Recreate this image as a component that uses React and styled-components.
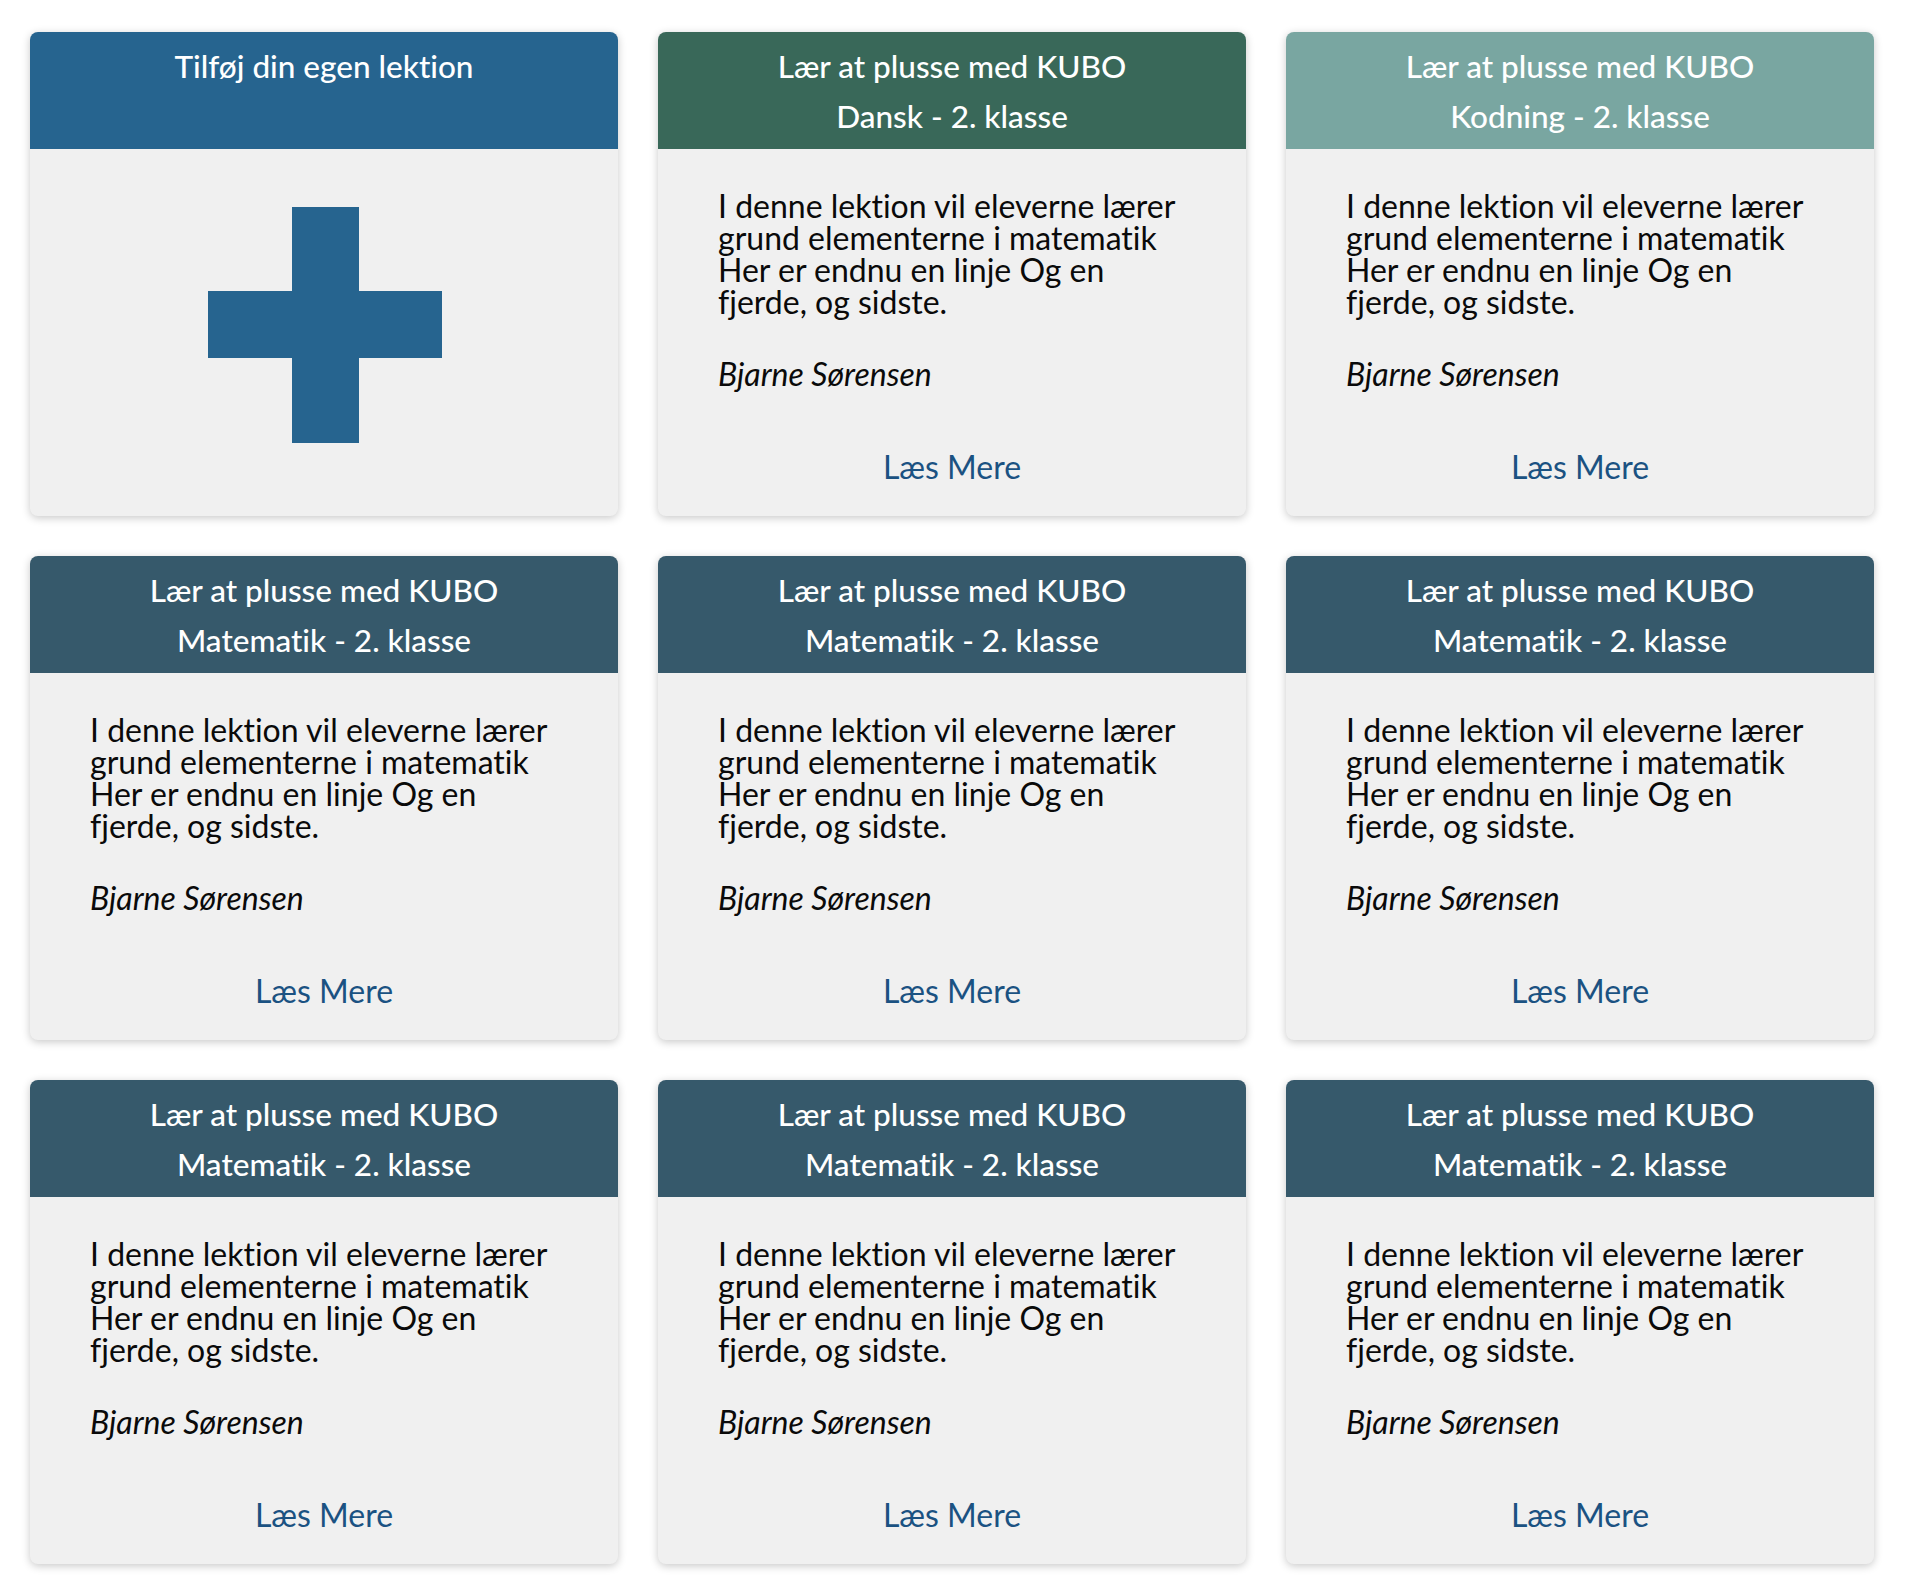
import React from "react";
import styled, { createGlobalStyle } from "styled-components";

const GlobalStyle = createGlobalStyle`
  html, body {
    margin: 0;
    padding: 0;
    background: #ffffff;
  }
  body {
    font-family: Lato, "Open Sans", "Liberation Sans", sans-serif;
    font-variant-ligatures: no-common-ligatures;
    -webkit-font-smoothing: antialiased;
  }
`;

const Grid = styled.div`
  display: grid;
  grid-template-columns: repeat(3, 588px);
  column-gap: 40px;
  row-gap: 40px;
  padding: 32px 0 31px 30px;
`;

const Card = styled.article`
  display: flex;
  flex-direction: column;
  height: 484px;
  background: #f0f0f0;
  border-radius: 8px;
  overflow: hidden;
  box-shadow: 0 2px 9px rgba(0, 0, 0, 0.22);
`;

const Header = styled.header`
  box-sizing: border-box;
  height: 117px;
  flex: 0 0 auto;
  padding-top: 9px;
  background: ${(p) => p.$bg};
  color: #ffffff;
  text-align: center;
  font-size: 31.5px;
  line-height: 50px;
  font-weight: 500;
`;

const HeaderLine = styled.div`
  white-space: nowrap;
`;

const Body = styled.div`
  flex: 1 1 auto;
  display: flex;
  flex-direction: column;
  padding: 41px 60px 0;
  color: #0a0a0a;
`;

const Description = styled.p`
  margin: 0;
  font-size: 32px;
  line-height: 32px;
  white-space: nowrap;
`;

const Author = styled.p`
  margin: 40px 0 0;
  font-size: 32px;
  line-height: 32px;
  font-style: italic;
`;

const ReadMore = styled.a`
  display: block;
  margin-top: 61px;
  text-align: center;
  font-size: 32px;
  line-height: 32px;
  color: #1b5282;
  text-decoration: none;
`;

const AddBody = styled.div`
  flex: 1 1 auto;
  display: flex;
  justify-content: center;
  align-items: flex-start;
  padding-top: 58px;
  padding-left: 2px;
`;

const PlusIcon = () => (
  <svg width="234" height="236" viewBox="0 0 234 236" aria-hidden="true">
    <rect x="84" y="0" width="67" height="236" fill="#26648f" />
    <rect x="0" y="84" width="234" height="67" fill="#26648f" />
  </svg>
);

const lessons = [
  { subject: "Dansk", bg: "#396859" },
  { subject: "Kodning", bg: "#79a6a1" },
  { subject: "Matematik", bg: "#36596b" },
  { subject: "Matematik", bg: "#36596b" },
  { subject: "Matematik", bg: "#36596b" },
  { subject: "Matematik", bg: "#36596b" },
  { subject: "Matematik", bg: "#36596b" },
  { subject: "Matematik", bg: "#36596b" },
];

const LessonCard = ({ subject, bg }) => (
  <Card>
    <Header $bg={bg}>
      <HeaderLine>Lær at plusse med KUBO</HeaderLine>
      <HeaderLine>{subject} - 2. klasse</HeaderLine>
    </Header>
    <Body>
      <Description>
        I denne lektion vil eleverne lærer
        <br />
        grund elementerne i matematik
        <br />
        Her er endnu en linje Og en
        <br />
        fjerde, og sidste.
      </Description>
      <Author>Bjarne Sørensen</Author>
      <ReadMore href="#">Læs Mere</ReadMore>
    </Body>
  </Card>
);

export default function App() {
  return (
    <>
      <GlobalStyle />
      <Grid>
        <Card>
          <Header $bg="#26648f">
            <HeaderLine>Tilføj din egen lektion</HeaderLine>
          </Header>
          <AddBody>
            <PlusIcon />
          </AddBody>
        </Card>
        {lessons.map((l, i) => (
          <LessonCard key={i} subject={l.subject} bg={l.bg} />
        ))}
      </Grid>
    </>
  );
}
